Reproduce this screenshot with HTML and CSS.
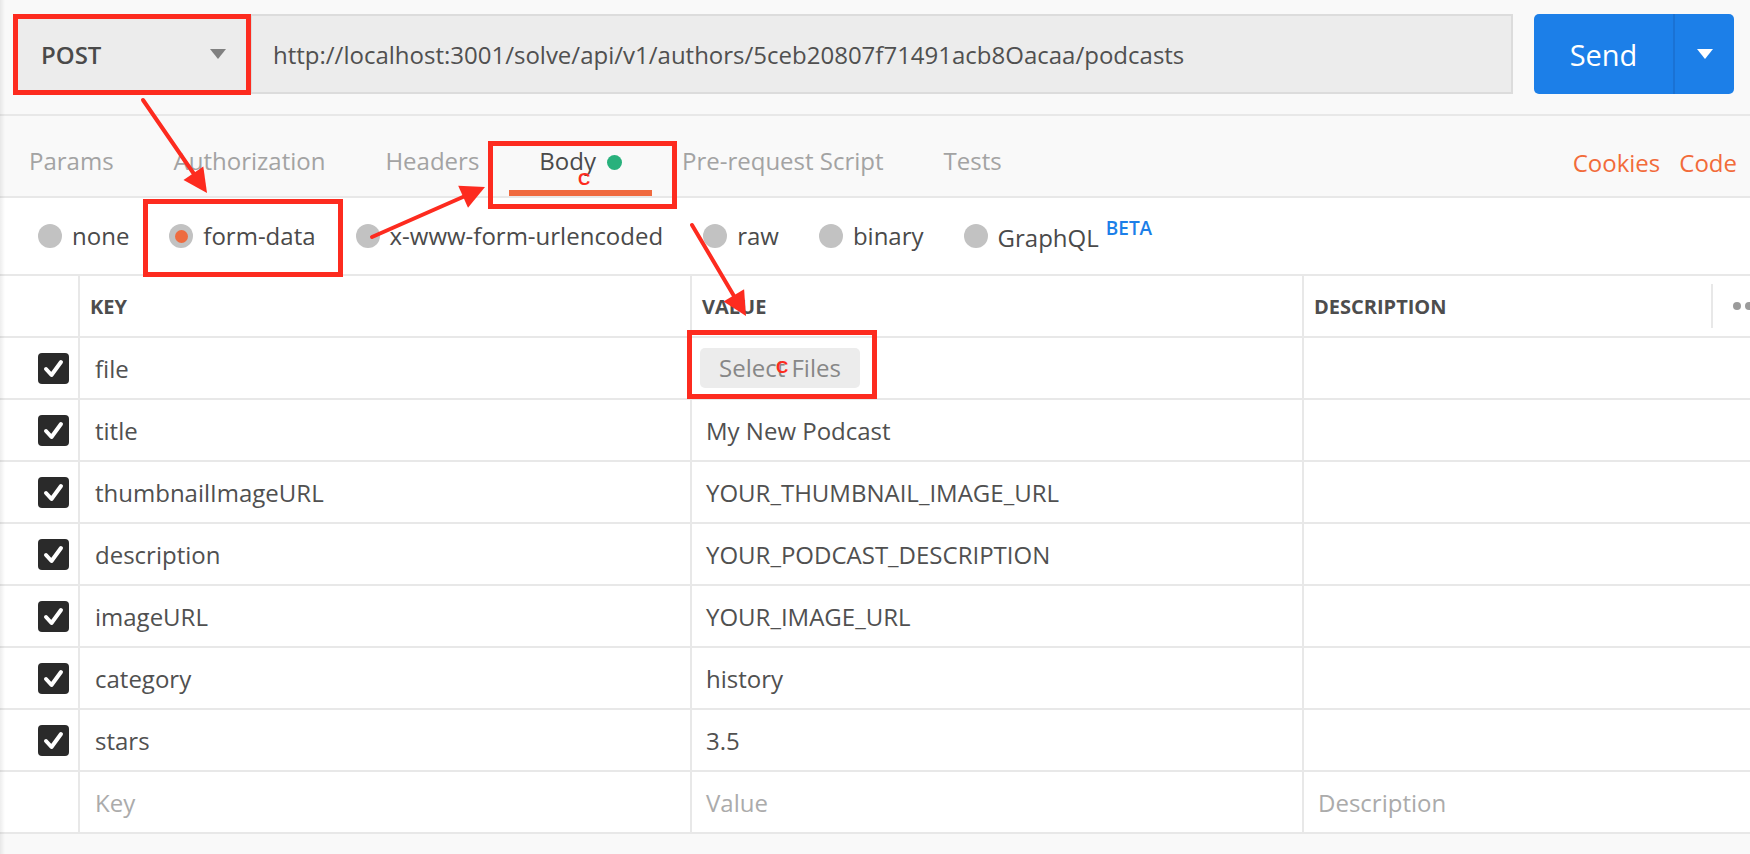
FILE: index.html
```html
<!DOCTYPE html>
<html lang="en">
<head>
<meta charset="utf-8">
<title>Postman request</title>
<link rel="stylesheet" href="styles.css">
</head>
<body>
<div class="app">
  <div class="topbar">
    <div class="method"><span class="method-name">POST</span><span class="caret-grey"></span></div>
    <div class="url">http://localhost:3001/solve/api/v1/authors/5ceb20807f71491acb8Oacaa/podcasts</div>
    <div class="send">
      <span class="send-label">Send</span>
      <span class="send-menu"><span class="caret-white"></span></span>
    </div>
  </div>

  <div class="tabs">
    <div class="tab first">Params</div>
    <div class="tab">Authorization</div>
    <div class="tab">Headers</div>
    <div class="tab active">Body<span class="dot"></span></div>
    <div class="tab">Pre-request Script</div>
    <div class="tab">Tests</div>
    <div class="tab-links"><span class="link">Cookies</span><span class="link">Code</span></div>
  </div>

  <div class="modes">
    <div class="mode"><span class="radio"></span><span class="mode-label">none</span></div>
    <div class="mode"><span class="radio checked"></span><span class="mode-label">form-data</span></div>
    <div class="mode"><span class="radio"></span><span class="mode-label">x-www-form-urlencoded</span></div>
    <div class="mode"><span class="radio"></span><span class="mode-label">raw</span></div>
    <div class="mode"><span class="radio"></span><span class="mode-label">binary</span></div>
    <div class="mode"><span class="radio"></span><span class="mode-label">GraphQL<span class="beta">BETA</span></span></div>
  </div>

  <div class="table">
    <div class="cell head"></div>
    <div class="cell head">KEY</div>
    <div class="cell head">VALUE</div>
    <div class="cell head last"><span>DESCRIPTION</span><span class="col-sep"></span><span class="more"><i></i><i></i></span></div>

    <div class="cell check"><span class="checkbox"><svg viewBox="0 0 31 31" width="31" height="31"><polyline points="8,16 13.5,22 23,9" fill="none" stroke="#fff" stroke-width="4" stroke-linecap="round" stroke-linejoin="round"/></svg></span></div>
    <div class="cell key">file</div>
    <div class="cell"><span class="file-btn">Select Files</span></div>
    <div class="cell last"></div>

    <div class="cell check"><span class="checkbox"><svg viewBox="0 0 31 31" width="31" height="31"><polyline points="8,16 13.5,22 23,9" fill="none" stroke="#fff" stroke-width="4" stroke-linecap="round" stroke-linejoin="round"/></svg></span></div>
    <div class="cell key">title</div>
    <div class="cell">My New Podcast</div>
    <div class="cell last"></div>

    <div class="cell check"><span class="checkbox"><svg viewBox="0 0 31 31" width="31" height="31"><polyline points="8,16 13.5,22 23,9" fill="none" stroke="#fff" stroke-width="4" stroke-linecap="round" stroke-linejoin="round"/></svg></span></div>
    <div class="cell key">thumbnailImageURL</div>
    <div class="cell">YOUR_THUMBNAIL_IMAGE_URL</div>
    <div class="cell last"></div>

    <div class="cell check"><span class="checkbox"><svg viewBox="0 0 31 31" width="31" height="31"><polyline points="8,16 13.5,22 23,9" fill="none" stroke="#fff" stroke-width="4" stroke-linecap="round" stroke-linejoin="round"/></svg></span></div>
    <div class="cell key">description</div>
    <div class="cell">YOUR_PODCAST_DESCRIPTION</div>
    <div class="cell last"></div>

    <div class="cell check"><span class="checkbox"><svg viewBox="0 0 31 31" width="31" height="31"><polyline points="8,16 13.5,22 23,9" fill="none" stroke="#fff" stroke-width="4" stroke-linecap="round" stroke-linejoin="round"/></svg></span></div>
    <div class="cell key">imageURL</div>
    <div class="cell">YOUR_IMAGE_URL</div>
    <div class="cell last"></div>

    <div class="cell check"><span class="checkbox"><svg viewBox="0 0 31 31" width="31" height="31"><polyline points="8,16 13.5,22 23,9" fill="none" stroke="#fff" stroke-width="4" stroke-linecap="round" stroke-linejoin="round"/></svg></span></div>
    <div class="cell key">category</div>
    <div class="cell">history</div>
    <div class="cell last"></div>

    <div class="cell check"><span class="checkbox"><svg viewBox="0 0 31 31" width="31" height="31"><polyline points="8,16 13.5,22 23,9" fill="none" stroke="#fff" stroke-width="4" stroke-linecap="round" stroke-linejoin="round"/></svg></span></div>
    <div class="cell key">stars</div>
    <div class="cell">3.5</div>
    <div class="cell last"></div>

    <div class="cell check"></div>
    <div class="cell key placeholder">Key</div>
    <div class="cell placeholder">Value</div>
    <div class="cell placeholder last">Description</div>
  </div>

  <svg class="annot" width="1750" height="854" viewBox="0 0 1750 854">
    <g fill="none" stroke="#fd2b1f" stroke-width="5">
      <rect x="15.5" y="16.5" width="233" height="76"/>
      <rect x="490.5" y="143.5" width="184" height="63"/>
      <rect x="145.5" y="201.5" width="195" height="73"/>
      <rect x="689.5" y="332.5" width="185" height="64"/>
    </g>
    <g stroke="#fd2b1f" stroke-width="4" stroke-linecap="round">
      <line x1="143" y1="100" x2="194" y2="174"/>
      <line x1="372" y1="237" x2="464" y2="196.5"/>
      <line x1="692" y1="225" x2="734" y2="296"/>
    </g>
    <g fill="#fd2b1f">
      <polygon points="207,193 183.5,180 203.3,166.4"/>
      <polygon points="485,187 468,207.7 458.2,185.7"/>
      <polygon points="746,316 723.5,301.5 744.1,289.3"/>
    </g>
    <g fill="#fd2b1f" font-family="Liberation Sans, Arial, sans-serif" font-size="17" font-weight="bold">
      <text x="578" y="185">C</text>
      <text x="776" y="373">C</text>
    </g>
  </svg>
</div>
</body>
</html>
```

FILE: styles.css
```css
* { box-sizing: border-box; }

html, body {
  margin: 0;
  padding: 0;
}

body {
  background: #f9f9f9;
  font-family: "Open Sans", "Noto Sans", sans-serif;
  color: #505050;
  width: 1750px;
  height: 854px;
  overflow: hidden;
}

.app {
  position: relative;
  width: 1750px;
  height: 854px;
  overflow: hidden;
}

.app::before {
  content: "";
  position: absolute;
  left: 0;
  top: 0;
  bottom: 0;
  width: 5px;
  background: linear-gradient(to right, rgba(0, 0, 0, 0.07), rgba(0, 0, 0, 0));
  pointer-events: none;
  z-index: 1;
}

/* ---------- top bar ---------- */
.topbar {
  display: flex;
  height: 116px;
  padding: 14px 16px 0 16px;
  border-bottom: 2px solid #e8e8e8;
  background: #f9f9f9;
}

.method {
  width: 234px;
  height: 80px;
  display: flex;
  align-items: center;
  justify-content: space-between;
  padding: 0 24px 0 23px;
  background: #ececec;
  border: 2px solid #dcdcdc;
  border-right: none;
}

.method-name {
  font-size: 24px;
  font-weight: 600;
  color: #4a4a4a;
}

.caret-grey {
  width: 0;
  height: 0;
  border-left: 8px solid transparent;
  border-right: 8px solid transparent;
  border-top: 10px solid #808080;
}

.url {
  flex: 1;
  height: 80px;
  display: flex;
  align-items: center;
  padding-left: 21px;
  background: #ececec;
  border: 2px solid #dcdcdc;
  font-size: 24px;
  color: #505050;
  white-space: nowrap;
  overflow: hidden;
}

.send {
  margin-left: 21px;
  width: 200px;
  height: 80px;
  display: flex;
  background: #1c7fe8;
  border-radius: 5px;
  overflow: hidden;
}

.send-label {
  width: 139px;
  display: flex;
  align-items: center;
  justify-content: center;
  color: #fff;
  font-size: 29px;
}

.send-menu {
  flex: 1;
  display: flex;
  align-items: center;
  justify-content: center;
  border-left: 2px solid #1a72d4;
}

.caret-white {
  width: 0;
  height: 0;
  border-left: 8px solid transparent;
  border-right: 8px solid transparent;
  border-top: 10px solid #fff;
}

/* ---------- tabs ---------- */
.tabs {
  display: flex;
  height: 82px;
  border-bottom: 2px solid #e8e8e8;
  background: #f9f9f9;
}

.tab {
  height: 80px;
  padding: 29px 30px 0 30px;
  line-height: 32px;
  font-size: 24px;
  color: #a3a3a3;
  border-bottom: 6px solid transparent;
  display: flex;
  align-items: flex-start;
  white-space: nowrap;
}

.tab.first {
  padding-left: 29px;
}

.tab.active {
  color: #4a4a4a;
  border-bottom-color: #f06a3f;
}

.dot {
  width: 15px;
  height: 15px;
  margin-left: 11px;
  margin-top: 10px;
  border-radius: 50%;
  background: #28b17c;
}

.tab-links {
  margin-left: auto;
  display: flex;
  gap: 19px;
  padding: 31px 13px 0 0;
  line-height: 32px;
  font-size: 24px;
  color: #f26b3a;
}

/* ---------- body modes ---------- */
.modes {
  display: flex;
  align-items: center;
  gap: 40px;
  height: 76px;
  padding-left: 38px;
  background: #fff;
}

.mode {
  display: flex;
  align-items: center;
}

.radio {
  width: 24px;
  height: 24px;
  border-radius: 50%;
  background: #c2c2c2;
  display: flex;
  align-items: center;
  justify-content: center;
}

.radio.checked::after {
  content: "";
  width: 13px;
  height: 13px;
  border-radius: 50%;
  background: #ee6b3f;
}

.mode-label {
  margin-left: 10px;
  font-size: 24px;
  line-height: 32px;
  color: #4a4a4a;
  white-space: nowrap;
}

.beta {
  margin-left: 7px;
  font-size: 19px;
  font-weight: 600;
  color: #1c7fe8;
  vertical-align: 12px;
  line-height: 1;
}

/* ---------- key / value table ---------- */
.table {
  display: grid;
  grid-template-columns: 80px 612px 612px 1fr;
  grid-auto-rows: 62px;
  border-top: 2px solid #e8e8e8;
  background: #fff;
}

.cell {
  display: flex;
  align-items: center;
  padding-left: 14px;
  border-right: 2px solid #e8e8e8;
  border-bottom: 2px solid #e8e8e8;
  font-size: 24px;
  color: #505050;
  white-space: nowrap;
  overflow: hidden;
}

.cell.key {
  padding-left: 15px;
}

.cell.last {
  border-right: none;
}

.cell.head {
  padding-left: 10px;
  font-size: 20px;
  font-weight: 700;
  color: #4d4d4d;
}

.cell.check {
  padding-left: 38px;
}

.cell.placeholder {
  color: #ababab;
}

.checkbox {
  width: 31px;
  height: 31px;
  border-radius: 4px;
  background: #2a2a2a;
  display: flex;
}

.col-sep {
  margin-left: auto;
  width: 2px;
  height: 44px;
  background: #e8e8e8;
}

.more {
  display: flex;
  gap: 4px;
  padding-left: 20px;
  width: 37px;
}

.more i {
  flex: none;
  width: 8px;
  height: 8px;
  border-radius: 50%;
  background: #9b9b9b;
}

.file-btn {
  margin-left: -6px;
  height: 40px;
  line-height: 40px;
  padding: 0 19px;
  border-radius: 5px;
  background: #ececec;
  color: #878787;
}

/* ---------- annotations overlay ---------- */
.annot {
  position: absolute;
  left: 0;
  top: 0;
  pointer-events: none;
  z-index: 2;
}
```
